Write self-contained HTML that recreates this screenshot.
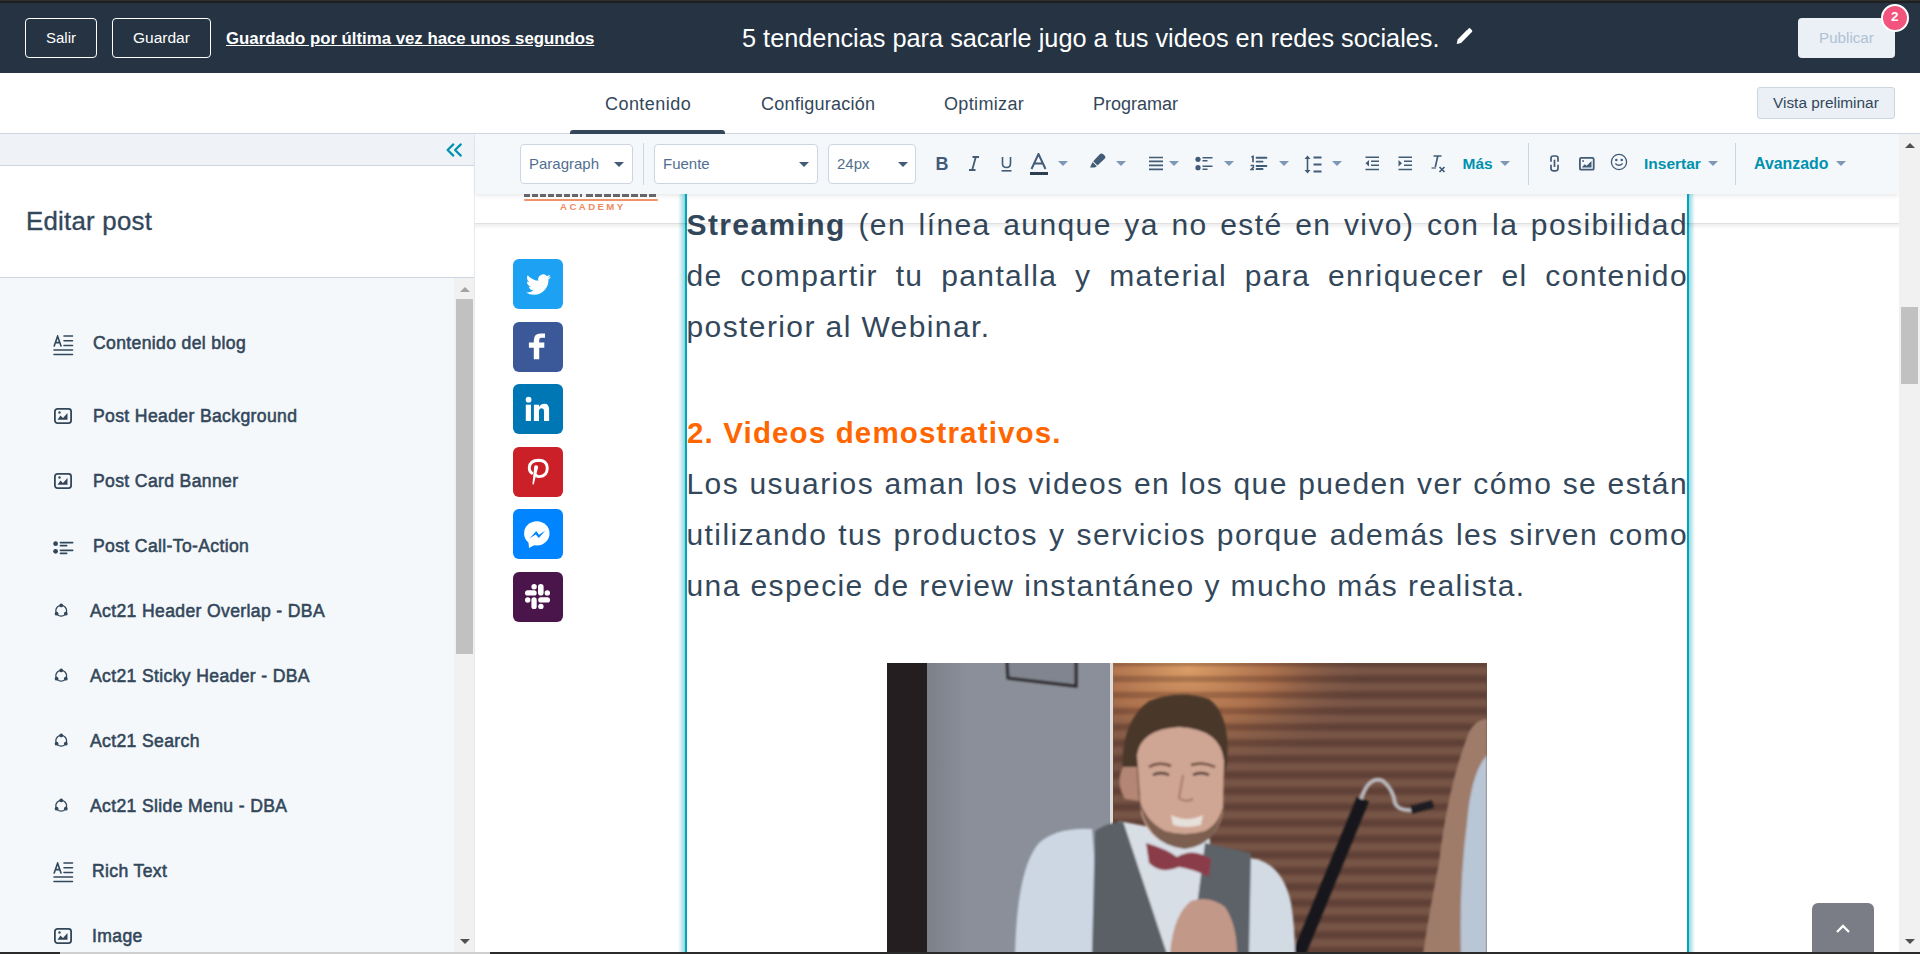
<!DOCTYPE html>
<html><head><meta charset="utf-8">
<style>
*{box-sizing:border-box;margin:0;padding:0}
html,body{width:1920px;height:954px;overflow:hidden;background:#fff;font-family:"Liberation Sans",sans-serif;color:#33475b}
.a{position:absolute}
.t{position:absolute;white-space:nowrap;line-height:1}
/* header */
#hdr{left:0;top:0;width:1920px;height:73px;background:#253342}
#hdrtop{left:0;top:0;width:1920px;height:3px;background:#1f1f1f;border-top:1px solid #2f2f2f}
.obtn{position:absolute;border:1px solid #fff;border-radius:4px;color:#fff;font-size:15px}
/* tabs */
#tabs{left:0;top:73px;width:1920px;height:61px;background:#fff;border-bottom:1px solid #cbd6e2}
.tab{font-size:18px;color:#33475b}
/* left */
#lp{left:0;top:134px;width:475px;height:820px;background:#f5f8fa;border-right:1px solid #e5e9f2}
.item{font-size:17px;font-weight:bold;color:#33475b}
/* toolbar */
#tb{left:475px;top:134px;width:1424px;height:60px;background:#f5f8fa;box-shadow:0 3px 4px -1px rgba(0,0,0,0.09)}
.dd{position:absolute;top:144px;height:40px;background:#fff;border:1px solid #cbd6e2;border-radius:4px}
.ddt{font-size:15px;color:#516f90}
.caret{position:absolute;width:0;height:0;border-left:5px solid transparent;border-right:5px solid transparent;border-top:5px solid #425b76}
.lc{border-top-color:#7c98b6}
.tl{font-size:15.5px;font-weight:bold;color:#0091ae}
.vdiv{position:absolute;top:143px;width:1px;height:42px;background:#cbd6e2}
/* content */
.p{position:absolute;left:686.5px;letter-spacing:1.4px;font-size:30px;color:#33475b;white-space:nowrap;line-height:1}
.j{width:1001.5px;text-align:justify;text-align-last:justify}
.soc{position:absolute;left:513px;width:50px;height:50px;border-radius:6px}
</style></head><body>

<!-- HEADER -->
<div class="a" id="hdr"></div>
<div class="a" id="hdrtop"></div>
<div class="obtn" style="left:25px;top:18px;width:72px;height:40px"></div>
<div class="t" style="left:46px;top:30px;font-size:15px;color:#fff">Salir</div>
<div class="obtn" style="left:112px;top:18px;width:99px;height:40px"></div>
<div class="t" style="left:133px;top:30px;font-size:15.5px;color:#fff">Guardar</div>
<div class="t" style="left:226px;top:31px;font-size:16.8px;font-weight:bold;color:#fff;text-decoration:underline">Guardado por última vez hace unos segundos</div>
<div class="t" style="left:742px;top:26px;font-size:25.3px;color:#fff">5 tendencias para sacarle jugo a tus videos en redes sociales.</div>
<svg class="a" style="left:1456px;top:27px" width="18" height="18" viewBox="0 0 18 18"><path d="M0.7 17 L1.6 12.4 L10.9 3.1 L14.4 6.6 L5.1 15.9 Z" fill="#fff"/><g transform="rotate(45 13.6 3.8)"><rect x="11.2" y="1.6" width="4.9" height="4.2" rx="1.6" fill="#fff"/></g></svg>
<div class="a" style="left:1798px;top:18px;width:97px;height:40px;background:#eaf0f6;border-radius:4px"></div>
<div class="t" style="left:1819px;top:30px;font-size:15.2px;color:#b0c1d4">Publicar</div>
<div class="a" style="left:1881px;top:4px;width:28px;height:28px;border-radius:50%;background:#f2547d;border:2px solid #fff"></div>
<div class="t" style="left:1891px;top:10px;font-size:13.5px;font-weight:bold;color:#fff">2</div>

<!-- TABS -->
<div class="a" id="tabs"></div>
<div class="t tab" style="left:605px;top:94.5px;letter-spacing:0.45px">Contenido</div>
<div class="t tab" style="left:761px;top:94.5px;letter-spacing:0.25px">Configuración</div>
<div class="t tab" style="left:944px;top:94.5px;letter-spacing:0.35px">Optimizar</div>
<div class="t tab" style="left:1093px;top:94.5px">Programar</div>
<div class="a" style="left:570px;top:130px;width:155px;height:4px;background:#33475b;border-radius:3px 3px 0 0"></div>
<div class="a" style="left:1757px;top:87px;width:138px;height:32px;background:#eaf0f6;border:1px solid #cbd6e2;border-radius:3px"></div>
<div class="t" style="left:1773px;top:95px;font-size:15.4px;color:#33475b">Vista preliminar</div>

<!-- LEFT PANEL -->
<div class="a" id="lp"></div>
<div class="a" style="left:0;top:134px;width:474px;height:31px;background:#eff3f7"></div>
<div class="a" style="left:0;top:165px;width:474px;height:113px;background:#fff;border-top:1px solid #cbd6e2;border-bottom:1px solid #cbd6e2"></div>
<div class="t" style="left:26px;top:209.2px;font-size:25.8px;letter-spacing:0.25px;color:#33475b;-webkit-text-stroke:0.35px #33475b">Editar post</div>
<svg class="a" style="left:444px;top:141px" width="20" height="18" viewBox="0 0 20 18" fill="none" stroke="#0091ae" stroke-width="2.2" stroke-linecap="round" stroke-linejoin="round"><path d="M9.3 3.4 L3.6 9 L9.3 14.6 M16.8 3.4 L11.1 9 L16.8 14.6"/></svg>
<div class="a" id="lscroll" style="left:454px;top:278px;width:20px;height:676px;background:#f1f1f1"></div>
<div class="a" style="left:456px;top:299px;width:17px;height:355px;background:#c1c1c1"></div>
<div class="caret" style="left:460px;top:287px;border-top:0;border-bottom:5px solid #a3a3a3"></div>
<div class="caret" style="left:460px;top:939px;border-top-color:#505050"></div>

<svg class="a" style="left:52.5px;top:334.5px" width="21" height="21" viewBox="0 0 21 21" fill="none" stroke="#33475b" stroke-width="1.6" stroke-linecap="round"><path d="M1.2 11 L4.6 1.2 L8 11 M2.4 7.6 H6.8"/><path d="M11 1 H19.5 M11 5.8 H19.5 M11 10.5 H19.5 M1 15 H19.5 M1 19.5 H19.5"/></svg>
<div class="t" style="left:93px;top:335.1px;font-size:17.6px;color:#33475b;-webkit-text-stroke:0.55px #33475b;letter-spacing:0.35px">Contenido del blog</div>
<svg class="a" style="left:54px;top:408.0px" width="18" height="16" viewBox="0 0 18 16"><rect x="0.9" y="0.9" width="16.2" height="14.2" rx="2.5" fill="none" stroke="#33475b" stroke-width="1.8"/><path d="M3.5 11.8 L6.5 7.5 L9 10 L13.5 5 L13.5 11.8 Z" fill="#33475b"/><circle cx="5.5" cy="4.5" r="1.2" fill="#33475b"/></svg>
<div class="t" style="left:93px;top:408.1px;font-size:17.6px;color:#33475b;-webkit-text-stroke:0.55px #33475b;letter-spacing:0.35px">Post Header Background</div>
<svg class="a" style="left:54px;top:472.9px" width="18" height="16" viewBox="0 0 18 16"><rect x="0.9" y="0.9" width="16.2" height="14.2" rx="2.5" fill="none" stroke="#33475b" stroke-width="1.8"/><path d="M3.5 11.8 L6.5 7.5 L9 10 L13.5 5 L13.5 11.8 Z" fill="#33475b"/><circle cx="5.5" cy="4.5" r="1.2" fill="#33475b"/></svg>
<div class="t" style="left:93px;top:473.0px;font-size:17.6px;color:#33475b;-webkit-text-stroke:0.55px #33475b;letter-spacing:0.35px">Post Card Banner</div>
<svg class="a" style="left:52.5px;top:540.1px" width="21" height="15" viewBox="0 0 21 15" fill="#33475b"><circle cx="2.6" cy="3.7" r="2.4"/><circle cx="2.6" cy="11.3" r="2.4"/><g stroke="#33475b" stroke-width="1.8" stroke-linecap="round"><path d="M7.5 2.6 H19.6 M7.5 5.6 H13.6 M7.5 10.3 H19.6 M7.5 13.3 H13.6"/></g></svg>
<div class="t" style="left:93px;top:538.2px;font-size:17.6px;color:#33475b;-webkit-text-stroke:0.55px #33475b;letter-spacing:0.35px">Post Call-To-Action</div>
<svg class="a" style="left:54px;top:602.7px" width="15" height="15" viewBox="0 0 15 15"><circle cx="7.2" cy="7.8" r="5.4" fill="none" stroke="#33475b" stroke-width="1.3"/><circle cx="7.2" cy="2.4" r="1.9" fill="#33475b"/><circle cx="2.6" cy="10.7" r="1.9" fill="#33475b"/><circle cx="11.8" cy="10.7" r="1.9" fill="#33475b"/></svg>
<div class="t" style="left:90px;top:602.8px;font-size:17.6px;color:#33475b;-webkit-text-stroke:0.55px #33475b;letter-spacing:0.35px">Act21 Header Overlap - DBA</div>
<svg class="a" style="left:54px;top:667.8px" width="15" height="15" viewBox="0 0 15 15"><circle cx="7.2" cy="7.8" r="5.4" fill="none" stroke="#33475b" stroke-width="1.3"/><circle cx="7.2" cy="2.4" r="1.9" fill="#33475b"/><circle cx="2.6" cy="10.7" r="1.9" fill="#33475b"/><circle cx="11.8" cy="10.7" r="1.9" fill="#33475b"/></svg>
<div class="t" style="left:90px;top:667.9px;font-size:17.6px;color:#33475b;-webkit-text-stroke:0.55px #33475b;letter-spacing:0.35px">Act21 Sticky Header - DBA</div>
<svg class="a" style="left:54px;top:732.8px" width="15" height="15" viewBox="0 0 15 15"><circle cx="7.2" cy="7.8" r="5.4" fill="none" stroke="#33475b" stroke-width="1.3"/><circle cx="7.2" cy="2.4" r="1.9" fill="#33475b"/><circle cx="2.6" cy="10.7" r="1.9" fill="#33475b"/><circle cx="11.8" cy="10.7" r="1.9" fill="#33475b"/></svg>
<div class="t" style="left:90px;top:732.9px;font-size:17.6px;color:#33475b;-webkit-text-stroke:0.55px #33475b;letter-spacing:0.35px">Act21 Search</div>
<svg class="a" style="left:54px;top:797.7px" width="15" height="15" viewBox="0 0 15 15"><circle cx="7.2" cy="7.8" r="5.4" fill="none" stroke="#33475b" stroke-width="1.3"/><circle cx="7.2" cy="2.4" r="1.9" fill="#33475b"/><circle cx="2.6" cy="10.7" r="1.9" fill="#33475b"/><circle cx="11.8" cy="10.7" r="1.9" fill="#33475b"/></svg>
<div class="t" style="left:90px;top:797.8px;font-size:17.6px;color:#33475b;-webkit-text-stroke:0.55px #33475b;letter-spacing:0.35px">Act21 Slide Menu - DBA</div>
<svg class="a" style="left:52.5px;top:862.4px" width="21" height="21" viewBox="0 0 21 21" fill="none" stroke="#33475b" stroke-width="1.6" stroke-linecap="round"><path d="M1.2 11 L4.6 1.2 L8 11 M2.4 7.6 H6.8"/><path d="M11 1 H19.5 M11 5.8 H19.5 M11 10.5 H19.5 M1 15 H19.5 M1 19.5 H19.5"/></svg>
<div class="t" style="left:92px;top:863.0px;font-size:17.6px;color:#33475b;-webkit-text-stroke:0.55px #33475b;letter-spacing:0.35px">Rich Text</div>
<svg class="a" style="left:54px;top:927.7px" width="18" height="16" viewBox="0 0 18 16"><rect x="0.9" y="0.9" width="16.2" height="14.2" rx="2.5" fill="none" stroke="#33475b" stroke-width="1.8"/><path d="M3.5 11.8 L6.5 7.5 L9 10 L13.5 5 L13.5 11.8 Z" fill="#33475b"/><circle cx="5.5" cy="4.5" r="1.2" fill="#33475b"/></svg>
<div class="t" style="left:92px;top:927.8px;font-size:17.6px;color:#33475b;-webkit-text-stroke:0.55px #33475b;letter-spacing:0.35px">Image</div>

<!-- TOOLBAR -->
<div class="a" id="tb"></div>
<div class="dd" style="left:520px;width:113px"></div>
<div class="t" style="left:529px;top:155.5px;font-size:15px;color:#516f90">Paragraph</div>
<div class="caret" style="left:614px;top:162px"></div>
<div class="vdiv" style="left:643px"></div>
<div class="dd" style="left:654px;width:164px"></div>
<div class="t" style="left:663px;top:155.5px;font-size:15px;color:#516f90">Fuente</div>
<div class="caret" style="left:799px;top:162px"></div>
<div class="dd" style="left:828px;width:88px"></div>
<div class="t" style="left:837px;top:155.5px;font-size:15px;color:#516f90">24px</div>
<div class="caret" style="left:898px;top:162px"></div>
<div class="t" style="left:935.5px;top:154.8px;font-size:18px;font-weight:bold;color:#425b76">B</div>
<svg class="a" style="left:968px;top:156px" width="12" height="15" viewBox="0 0 12 15" fill="none" stroke="#425b76" stroke-width="1.8"><path d="M4.5 1 H11 M1 14 H7.5 M7.8 1 L4.2 14"/></svg>
<svg class="a" style="left:1000px;top:156px" width="13" height="16" viewBox="0 0 13 16" fill="none" stroke="#425b76" stroke-width="1.6"><path d="M2.5 1 V7.5 Q2.5 11.5 6.5 11.5 Q10.5 11.5 10.5 7.5 V1"/><path d="M1.5 14.8 H11.5"/></svg>
<svg class="a" style="left:1029px;top:153px" width="20" height="23" viewBox="0 0 20 23"><path d="M2.5 16 L9.5 1 L16.5 16 M5 10.5 H14" fill="none" stroke="#425b76" stroke-width="2"/><rect x="1" y="19" width="18" height="3" fill="#2d3e50"/></svg>
<div class="caret lc" style="left:1058px;top:161px"></div>
<svg class="a" style="left:1089px;top:153px" width="17" height="15" viewBox="0 0 17 15" fill="#425b76"><path d="M11 1 Q12.5 -0.2 14 1 L15.8 2.8 Q17 4.3 15.6 5.7 L8.5 12.6 L4.2 8.2 Z"/><path d="M3.6 8.9 L7.8 13.2 L5.7 14.4 L1 14.4 Z"/></svg>
<div class="caret lc" style="left:1116px;top:161px"></div>
<svg class="a" style="left:1149px;top:156px" width="15" height="15" viewBox="0 0 15 15" stroke="#425b76" stroke-width="1.7"><path d="M0 1.5 H14 M0 5.3 H14 M0 9.3 H14 M0 13.3 H14"/></svg>
<div class="caret lc" style="left:1169px;top:161px"></div>
<svg class="a" style="left:1195px;top:156px" width="19" height="15" viewBox="0 0 19 15" fill="#425b76"><circle cx="3" cy="3.3" r="2.6"/><circle cx="3" cy="11.7" r="2.6"/><g stroke="#425b76" stroke-width="1.6"><path d="M7.5 1.8 H17.5 M7.5 4.8 H12.5 M7.5 10.3 H17.5 M7.5 13.3 H12.5"/></g></svg>
<div class="caret lc" style="left:1224px;top:161px"></div>
<svg class="a" style="left:1250px;top:155px" width="19" height="17" viewBox="0 0 19 17"><g fill="none" stroke="#425b76" stroke-width="1.7"><path d="M1.4 2 L3 1.4 V7.2"/><path d="M0.6 10.6 H3.4 V12.4 L0.9 14.6 H3.9" stroke-width="1.5"/></g><g stroke="#425b76" stroke-width="1.9" stroke-linecap="round"><path d="M6.6 2.8 H16.4 M6.6 6.6 H12.6 M6.6 11 H16.4 M6.6 14 H12.6"/></g></svg>
<div class="caret lc" style="left:1279px;top:161px"></div>
<svg class="a" style="left:1304px;top:155px" width="19" height="19" viewBox="0 0 19 19"><path d="M3.5 2 V17" stroke="#425b76" stroke-width="1.6"/><path d="M0.5 4 L3.5 0.5 L6.5 4 Z M0.5 15 L3.5 18.5 L6.5 15 Z" fill="#425b76"/><g stroke="#425b76" stroke-width="1.8"><path d="M9.5 2.5 H17.5 M9.5 9.5 H17.5 M9.5 16.5 H17.5"/></g></svg>
<div class="caret lc" style="left:1332px;top:161px"></div>
<svg class="a" style="left:1365px;top:156px" width="15" height="15" viewBox="0 0 15 15"><g stroke="#425b76" stroke-width="1.6"><path d="M0.5 1.3 H14 M6 5.3 H14 M6 9.3 H14 M0.5 13.5 H14"/></g><path d="M4 4 L0.5 7.3 L4 10.6 Z" fill="#425b76"/></svg>
<svg class="a" style="left:1398px;top:156px" width="15" height="15" viewBox="0 0 15 15"><g stroke="#425b76" stroke-width="1.6"><path d="M0.5 1.3 H14 M6 5.3 H14 M6 9.3 H14 M0.5 13.5 H14"/></g><path d="M0.5 4 L4 7.3 L0.5 10.6 Z" fill="#425b76"/></svg>
<svg class="a" style="left:1431px;top:155px" width="15" height="18" viewBox="0 0 15 18"><g stroke="#425b76" stroke-width="1.7" fill="none"><path d="M2.5 1 H10.5 M6.8 1 L4.3 12"/><path d="M8.5 12 L13.5 17 M13.5 12 L8.5 17"/><path d="M0.5 13 H5" stroke-width="1.2"/></g></svg>
<div class="t" style="left:1462.5px;top:156.1px;font-size:15.5px;font-weight:bold;color:#0091ae">Más</div>
<div class="caret lc" style="left:1500px;top:161px"></div>
<div class="vdiv" style="left:1528px"></div>
<svg class="a" style="left:1550px;top:155px" width="9" height="17" viewBox="0 0 9 17" fill="none" stroke="#425b76" stroke-width="1.7"><path d="M1 6.8 V3.2 Q1 1 3.2 1 H5.8 Q8 1 8 3.2 V6.8 M1 9.8 V13.6 Q1 15.8 3.2 15.8 H5.8 Q8 15.8 8 13.6 V9.8 M4.5 4.8 V12"/></svg>
<svg class="a" style="left:1579px;top:156.5px" width="16" height="14" viewBox="0 0 16 14"><rect x="0.9" y="0.9" width="13.8" height="11.8" rx="1.3" fill="none" stroke="#425b76" stroke-width="1.8"/><path d="M2.8 10.6 L5.6 7.2 L7.6 8.8 L12.5 3.9 L12.5 10.6 Z" fill="#425b76"/><circle cx="4.1" cy="4" r="0.9" fill="#425b76"/></svg>
<svg class="a" style="left:1610px;top:153px" width="18" height="18" viewBox="0 0 18 18" fill="none" stroke="#425b76" stroke-width="1.3"><circle cx="9" cy="9" r="7.6"/><path d="M5.3 10.5 Q9 14 12.7 10.5"/><circle cx="6.3" cy="7" r="0.6" fill="#425b76"/><circle cx="11.7" cy="7" r="0.6" fill="#425b76"/></svg>
<div class="t" style="left:1644px;top:156.1px;font-size:15.5px;font-weight:bold;color:#0091ae">Insertar</div>
<div class="caret lc" style="left:1708px;top:161px"></div>
<div class="vdiv" style="left:1735px"></div>
<div class="t" style="left:1754px;top:155.7px;font-size:15.9px;font-weight:bold;color:#0091ae">Avanzado</div>
<div class="caret lc" style="left:1836px;top:161px"></div>

<!-- CONTENT -->
<div id="content"></div>
<div class="a" style="left:524px;top:194px;width:58px;height:3px;background:repeating-linear-gradient(90deg,#55565b 0 6px,transparent 6px 8px);opacity:.9"></div>
<div class="a" style="left:586px;top:194px;width:72px;height:3px;background:repeating-linear-gradient(90deg,#55565b 0 7px,transparent 7px 9px);opacity:.9"></div>
<div class="a" style="left:524px;top:198.5px;width:134px;height:2px;background:#f0936a;border-radius:1px"></div>
<div class="t" style="left:560px;top:202px;font-size:9.6px;font-weight:bold;letter-spacing:2.45px;color:#f08a5d">ACADEMY</div>
<div class="soc" style="top:259px;background:#1da1f2"></div>
<svg class="a" style="left:526px;top:274px" width="25" height="22" viewBox="0 0.4 24 20"><path fill="#fff" d="M23.95 2.47a9.8 9.8 0 0 1-2.82.77 4.96 4.96 0 0 0 2.16-2.72 9.9 9.9 0 0 1-3.13 1.18A4.92 4.92 0 0 0 11.78 6.2 13.97 13.97 0 0 1 1.64 1.06a4.82 4.82 0 0 0-.67 2.48c0 1.71.87 3.21 2.19 4.1a4.9 4.9 0 0 1-2.23-.62v.06a4.92 4.92 0 0 0 3.95 4.83 5 5 0 0 1-2.21.08 4.94 4.94 0 0 0 4.6 3.42A9.87 9.87 0 0 1 0 17.55a13.99 13.99 0 0 0 7.56 2.21c9.05 0 14-7.5 14-13.99l-.02-.63A9.94 9.94 0 0 0 24 2.5z"/></svg>
<div class="soc" style="top:322px;background:#3b5998"></div>
<svg class="a" style="left:528px;top:333px" width="18" height="27" viewBox="0 0 18 27"><path fill="#fff" d="M5.8 26.3 V14.7 H0.9 V9.5 H5.8 V7.5 Q5.8 0.6 12.5 0.6 H17 V4.7 H13.4 Q11.2 4.7 11.2 6.9 V9.5 H16.3 V14.7 H11.2 V26.3 Z"/></svg>
<div class="soc" style="top:384px;background:#0077b5"></div>
<svg class="a" style="left:525px;top:396px" width="25" height="26" viewBox="0 0 25 26"><circle cx="3.6" cy="3.7" r="2.9" fill="#fff"/><rect x="0.8" y="8.7" width="5.2" height="16.3" fill="#fff"/><path fill="#fff" d="M8.9 8.7 H14 V11 Q16 7.8 19.5 7.8 Q24.1 7.8 24.1 13.5 V25 H19 V14.8 Q19 12.2 16.8 12.2 Q14 12.2 14 15 V25 H8.9 Z"/></svg>
<div class="soc" style="top:447px;background:#cb2027"></div>
<svg class="a" style="left:526px;top:457px" width="24" height="29" viewBox="0 0 24 29"><path fill="none" stroke="#fff" stroke-width="2.9" stroke-linecap="round" d="M5.8 16.2 Q3 14 3.3 10.3 Q4 3.3 12.6 3.2 Q20.8 3.3 21.3 10.8 Q21.2 19.4 13.5 19.6 Q11.2 19.6 10.2 18.3"/><path fill="#fff" d="M9.5 8.2 Q12 7.8 12.2 10 L7.8 27.3 Q6.2 28.2 6.5 26.3 L8.2 10 Q8.4 8.5 9.5 8.2 Z"/></svg>
<div class="soc" style="top:509px;background:#0084ff"></div>
<svg class="a" style="left:524px;top:521px" width="27" height="28" viewBox="0 0 27 28"><ellipse cx="12.8" cy="12.4" rx="12.7" ry="12.1" fill="#fff"/><path d="M4.3 19 L5 27 L11.5 23.5 Z" fill="#fff"/><path d="M5.8 17.3 L12.2 10 L15 13.7 L21.3 9.6 L14.8 17.1 L11.8 13.4 Z" fill="#0084ff"/></svg>
<div class="soc" style="top:572px;background:#4a154b"></div>
<svg class="a" style="left:524px;top:583px" width="28" height="28" viewBox="0 0 28 28" fill="#fff"><rect x="14" y="1" width="5.6" height="11.6" rx="2.8"/><circle cx="10.1" cy="3.8" r="2.7"/><rect x="1" y="7.2" width="11.7" height="5.4" rx="2.7"/><circle cx="23.3" cy="9.9" r="2.7"/><rect x="14.2" y="14.3" width="11.8" height="5.3" rx="2.65"/><circle cx="3.7" cy="17" r="2.7"/><rect x="7.4" y="14.3" width="5.3" height="11.8" rx="2.65"/><circle cx="16.9" cy="23.4" r="2.7"/></svg>
<div class="a" style="left:678px;top:194px;width:7px;height:760px;background:linear-gradient(90deg,rgba(0,164,189,0),rgba(0,164,189,.45))"></div>
<div class="a" style="left:685px;top:194px;width:2px;height:760px;background:#00a4bd"></div>
<div class="a" style="left:1687px;top:194px;width:2px;height:760px;background:#00a4bd"></div>
<div class="a" style="left:1689px;top:194px;width:6px;height:760px;background:linear-gradient(90deg,rgba(0,164,189,.42),rgba(0,164,189,0))"></div>
<div class="p j" style="top:209.9px;"><b>Streaming</b> (en línea aunque ya no esté en vivo) con la posibilidad</div>
<div class="p j" style="top:260.9px;">de compartir tu pantalla y material para enriquecer el contenido</div>
<div class="p" style="top:311.9px;">posterior al Webinar.</div>
<div class="t" style="left:687px;top:418.0px;font-size:29.5px;letter-spacing:1.15px;font-weight:bold;color:#ff6600">2. Videos demostrativos.</div>
<div class="p j" style="top:468.9px;">Los usuarios aman los videos en los que pueden ver cómo se están</div>
<div class="p j" style="top:519.9px;">utilizando tus productos y servicios porque además les sirven como</div>
<div class="p" style="top:570.9px;">una especie de review instantáneo y mucho más realista.</div>
<div class="a" style="left:475px;top:223px;width:1424px;height:1px;background:rgba(0,0,0,.12)"></div>
<div class="a" style="left:475px;top:224px;width:1424px;height:5px;background:linear-gradient(rgba(0,0,0,.07),rgba(0,0,0,0))"></div>

<svg class="a" style="left:887px;top:663px" width="600" height="291" viewBox="0 0 600 291">
<defs>
<radialGradient id="lit" cx="0.2" cy="0.02" r="0.5" gradientTransform="translate(0.2 0.02) scale(1 0.75) translate(-0.2 -0.02)"><stop offset="0" stop-color="#d89a62"/><stop offset="0.45" stop-color="#b07048" stop-opacity="0.85"/><stop offset="1" stop-color="#6a4a3c" stop-opacity="0"/></radialGradient>
<pattern id="slats" width="600" height="16" patternUnits="userSpaceOnUse" y="4"><rect width="600" height="6" y="9" fill="#3a2218" opacity="0.24"/><rect width="600" height="6" y="1" fill="#f0c0a0" opacity="0.09"/></pattern>
<filter id="bl" x="-5%" y="-5%" width="110%" height="110%"><feGaussianBlur stdDeviation="1.2"/></filter>
<filter id="bl2"><feGaussianBlur stdDeviation="4"/></filter>
</defs>
<linearGradient id="wl" x1="0" x2="1"><stop offset="0" stop-color="#7c8089"/><stop offset="1" stop-color="#8a8f99"/></linearGradient>
<rect width="600" height="291" fill="#8a8f99"/>
<rect x="40" width="40" height="291" fill="url(#wl)"/>
<rect x="0" width="40" height="291" fill="#241e20"/>
<rect x="226" width="374" height="291" fill="#6b4a3d"/>
<rect x="226" width="374" height="291" fill="url(#lit)"/>
<rect x="226" width="374" height="291" fill="url(#slats)" filter="url(#bl)"/>
<rect x="223" width="3" height="162" fill="#dedcdc"/>
<g filter="url(#bl)">
<path d="M120 -4 L121 15 L189 23 L189 -4 Z" fill="#80858f" stroke="#2a2629" stroke-width="3"/>
<!-- clarinet -->
<path d="M476 136 L412 291" stroke="#19171b" stroke-width="13"/>
<path d="M474 136 Q482 112 496 118 Q506 126 508 140 Q512 150 532 146" fill="none" stroke="#b8b8be" stroke-width="4"/>
<path d="M524 147 L546 141" stroke="#1e1e22" stroke-width="8"/>
<!-- woman right -->
<path d="M600 56 Q585 56 578 80 Q560 130 552 200 Q542 250 536 291 L600 291 Z" fill="#9f7b6a"/>
<path d="M600 92 Q584 110 580 160 Q572 220 574 291 L600 291 Z" fill="#b8c6d6"/>
<!-- left shirt sleeve -->
<path d="M128 291 Q130 205 152 180 Q170 164 205 166 L215 291 Z" fill="#cdd7e4"/>
<!-- right sleeve -->
<path d="M360 291 L362 195 Q395 198 404 240 Q408 265 408 291 Z" fill="#d2dae4"/>
<!-- shirt middle -->
<path d="M232 158 L323 176 L316 291 L270 291 Z" fill="#d8dee6"/>
<!-- vest left -->
<path d="M205 291 L208 168 Q220 160 236 158 L280 291 Z" fill="#5a6066"/>
<!-- vest right -->
<path d="M304 291 L318 180 L364 190 L362 291 Z" fill="#5c6268"/>
<!-- hair -->
<path d="M236 112 Q232 60 262 38 Q292 26 322 36 Q344 52 340 100 L336 120 L244 124 Z" fill="#4a3729"/>
<!-- ear -->
<path d="M236 104 Q228 120 238 136 L252 138 L250 104 Z" fill="#b48674"/>
<!-- face -->
<path d="M250 92 Q254 66 292 64 Q334 66 337 98 L336 150 Q330 180 298 184 Q262 182 254 150 Z" fill="#cfa593"/>
<!-- beard -->
<path d="M252 135 Q258 182 298 186 Q334 182 338 135 Q334 160 318 168 Q298 174 278 168 Q258 158 252 135 Z" fill="#7c5e50"/>
<path d="M284 152 Q300 160 316 152 L314 162 Q300 166 286 162 Z" fill="#e6e0da"/>
<path d="M262 104 Q272 98 284 103 M304 102 Q316 98 328 104" stroke="#6a4a3c" stroke-width="2.5" fill="none"/>
<path d="M266 112 Q274 108 282 112 M306 112 Q314 108 322 112" stroke="#4a3530" stroke-width="2.5" fill="none"/>
<path d="M296 112 L292 135 Q298 140 306 136" stroke="#a87a68" stroke-width="2" fill="none"/>
<!-- bowtie -->
<path d="M259 180 Q280 186 290 194 Q306 184 324 196 L322 214 Q306 206 292 204 Q274 212 262 200 Z" fill="#8a3c48"/>
<!-- hands -->
<path d="M283 291 Q286 252 304 238 Q322 232 338 244 Q350 262 350 291 Z" fill="#c29888"/>
</g>
</svg>

<div class="a" style="left:1812px;top:903px;width:62px;height:60px;background:#7a7d86;border-radius:6px 6px 0 0"></div>
<svg class="a" style="left:1835px;top:922px" width="16" height="12" viewBox="0 0 16 12"><path d="M2 10 L8 4 L14 10" fill="none" stroke="#fff" stroke-width="2.3"/></svg>
<!-- right scrollbar -->
<div class="a" style="left:1899px;top:134px;width:21px;height:820px;background:#f1f1f1"></div>
<div class="a" style="left:1901px;top:307px;width:17px;height:77px;background:#c1c1c1"></div>
<div class="caret" style="left:1905px;top:143px;border-top:0;border-bottom:5px solid #505050"></div>
<div class="caret" style="left:1905px;top:939px;border-top-color:#505050"></div>

<!-- bottom line -->
<div class="a" style="left:0;top:952px;width:1920px;height:2px;background:#2b2b2b"></div>
<div class="a" style="left:60px;top:952px;width:430px;height:2px;background:#cfcfcf"></div>
</body></html>
